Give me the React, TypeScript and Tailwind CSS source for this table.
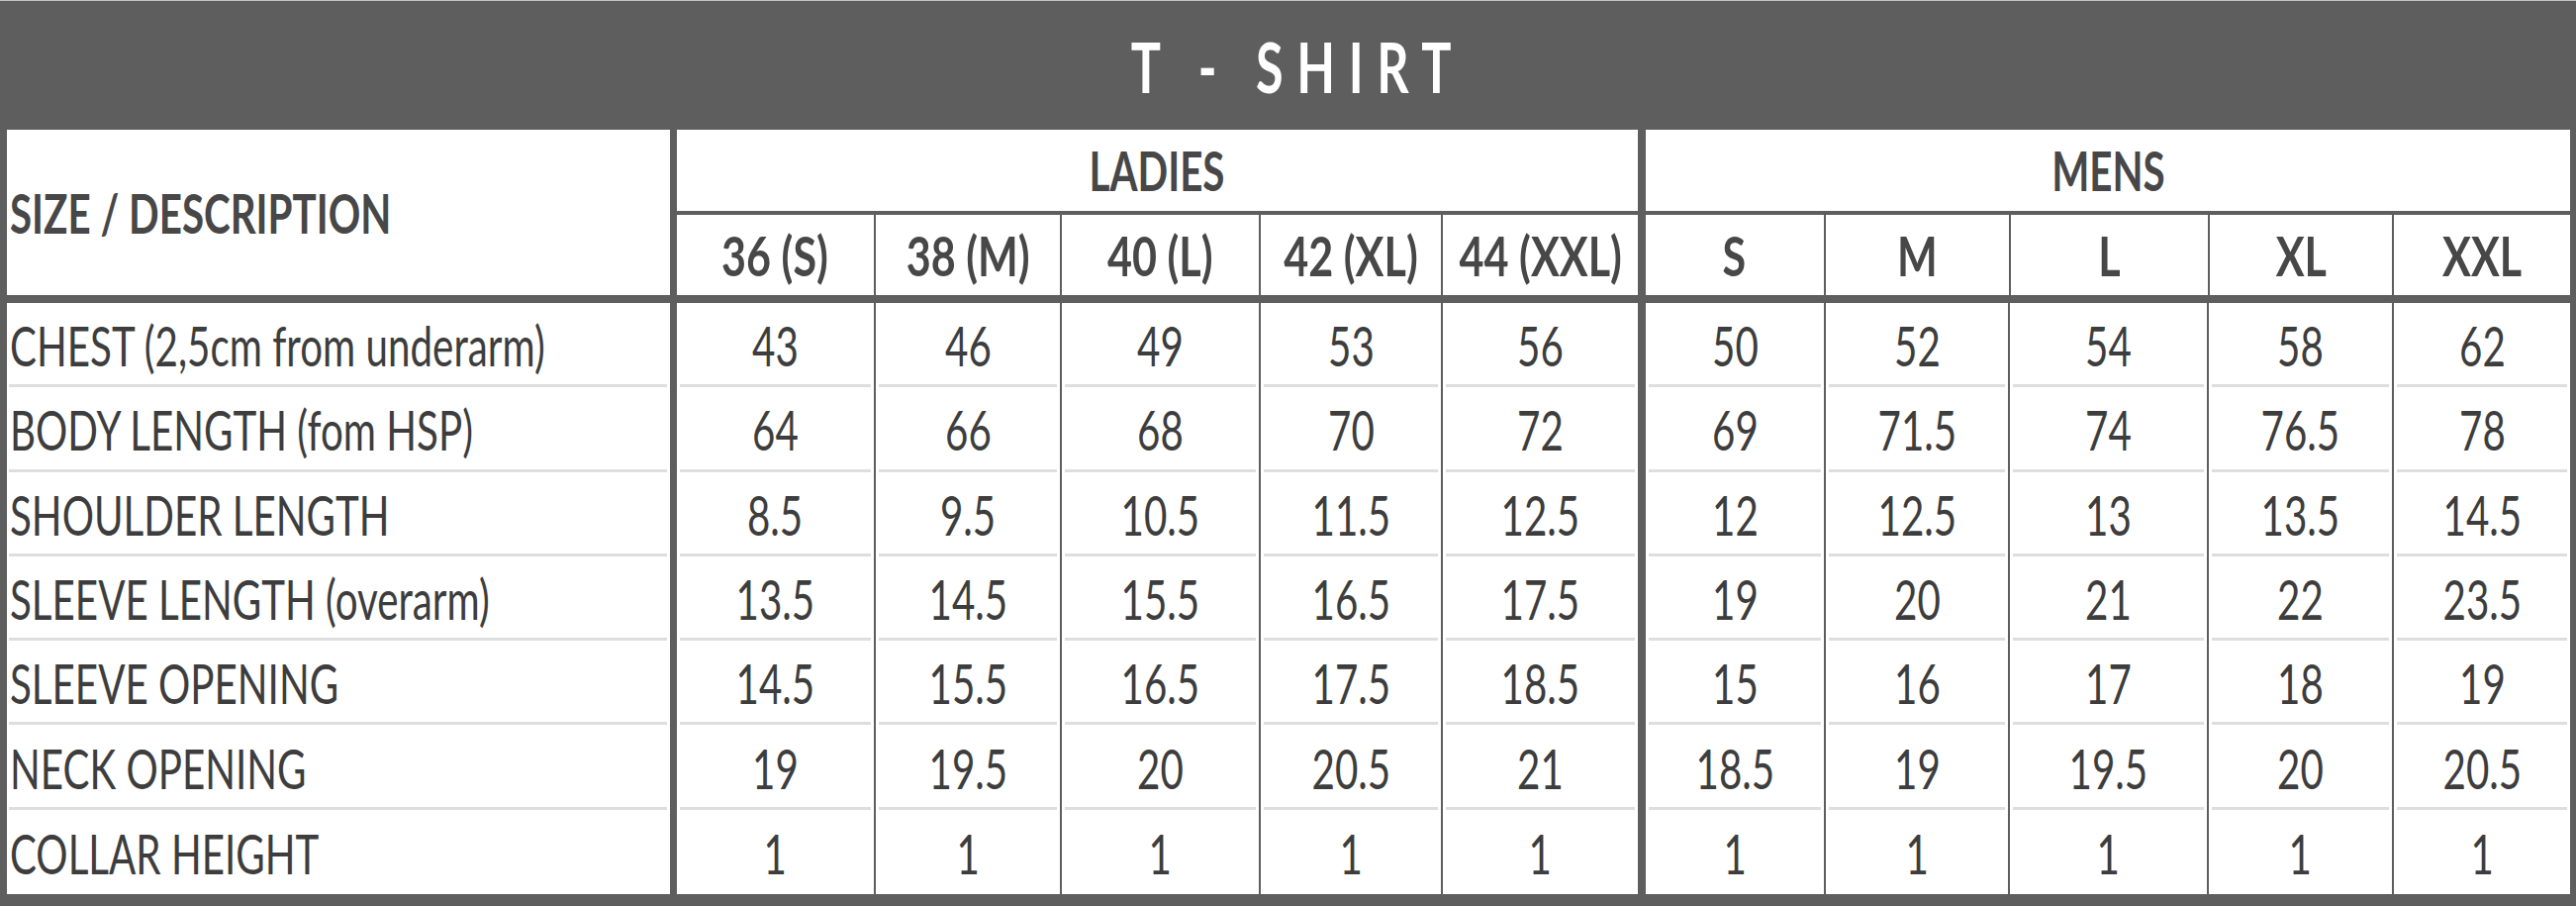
import React from "react";

const ROWS: string[][] = [
  ["CHEST (2,5cm from underarm)", "43", "46", "49", "53", "56", "50", "52", "54", "58", "62"],
  ["BODY LENGTH (fom HSP)", "64", "66", "68", "70", "72", "69", "71.5", "74", "76.5", "78"],
  ["SHOULDER LENGTH", "8.5", "9.5", "10.5", "11.5", "12.5", "12", "12.5", "13", "13.5", "14.5"],
  ["SLEEVE LENGTH (overarm)", "13.5", "14.5", "15.5", "16.5", "17.5", "19", "20", "21", "22", "23.5"],
  ["SLEEVE OPENING", "14.5", "15.5", "16.5", "17.5", "18.5", "15", "16", "17", "18", "19"],
  ["NECK OPENING", "19", "19.5", "20", "20.5", "21", "18.5", "19", "19.5", "20", "20.5"],
  ["COLLAR HEIGHT", "1", "1", "1", "1", "1", "1", "1", "1", "1", "1"],
];

const LADIES = ["36 (S)", "38 (M)", "40 (L)", "42 (XL)", "44 (XXL)"];
const MENS = ["S", "M", "L", "XL", "XXL"];

// border on the left of each data column (thick ones split the groups)
const colBorder = (i: number) => {
  if (i === 0) return "";
  if (i === 1) return "border-l-[7px]";
  if (i === 6) return "border-l-[8px]";
  return "border-l-2";
};

// condensed look of the original chart
function Sq({ children, left, wide }: { children: React.ReactNode; left?: boolean; wide?: boolean }) {
  return (
    <span
      className={`inline-block whitespace-nowrap ${wide ? "scale-x-[0.77]" : "scale-x-[0.72]"} ${
        left ? "origin-left" : "origin-center"
      }`}
    >
      {children}
    </span>
  );
}

function SizeCell({ label, w, first }: { label: string; w: string; first?: boolean }) {
  return (
    <div className={`${w} h-full flex items-center justify-center bg-white border-[#5e5e5e] ${first ? "" : "border-l-2"}`}>
      <Sq wide>{label}</Sq>
    </div>
  );
}

export default function App() {
  return (
    <div className="w-[2603px] h-[915px] bg-[#5e5e5e] flex flex-col font-['Lato','Liberation_Sans',sans-serif] leading-none text-[56px] text-[#3d3d3d]">
      <div className="h-px bg-[#c4c4c4]" />

      {/* title bar */}
      <div className="h-[130px] flex items-center justify-center pt-[2px]">
        <span className="inline-block scale-x-[0.72] text-white font-bold text-[70px] tracking-[0.27em] -mr-[0.27em]">
          T - SHIRT
        </span>
      </div>

      <div className="pl-[7px] pr-[6px]">
        {/* column headers */}
        <div className="flex h-[167px] font-bold text-[#474747]">
          <div className="w-[670px] bg-white flex items-center pl-[3px]">
            <Sq left>SIZE / DESCRIPTION</Sq>
          </div>

          <div className="w-[978px] border-l-[7px] border-[#5e5e5e] flex flex-col">
            <div className="h-[82px] bg-white flex items-center justify-center">
              <Sq>LADIES</Sq>
            </div>
            <div className="h-[4px] bg-[#5e5e5e]" />
            <div className="flex h-[81px]">
              <SizeCell label={LADIES[0]} w="w-[199px]" first />
              <SizeCell label={LADIES[1]} w="w-[188px]" />
              <SizeCell label={LADIES[2]} w="w-[201px]" />
              <SizeCell label={LADIES[3]} w="w-[184px]" />
              <SizeCell label={LADIES[4]} w="w-[199px]" />
            </div>
          </div>

          <div className="w-[942px] border-l-[8px] border-[#5e5e5e] flex flex-col">
            <div className="h-[82px] bg-white flex items-center justify-center">
              <Sq>MENS</Sq>
            </div>
            <div className="h-[4px] bg-[#5e5e5e]" />
            <div className="flex h-[81px]">
              <SizeCell label={MENS[0]} w="w-[180px]" first />
              <SizeCell label={MENS[1]} w="w-[188px]" />
              <SizeCell label={MENS[2]} w="w-[201px]" />
              <SizeCell label={MENS[3]} w="w-[187px]" />
              <SizeCell label={MENS[4]} w="w-[180px]" />
            </div>
          </div>
        </div>

        {/* measurements */}
        <div className="mt-[8px] grid grid-cols-[670px_206px_188px_201px_184px_199px_188px_186px_201px_187px_180px] auto-rows-[85.3px]">
          {ROWS.map((row, r) =>
            row.map((val, c) => (
              <div key={`${r}-${c}`} className={`bg-white flex flex-col border-[#5e5e5e] ${colBorder(c)}`}>
                <div className={`flex-1 flex items-center pt-[4px] ${c === 0 ? "pl-[3px]" : "justify-center"}`}>
                  <Sq left={c === 0}>{val}</Sq>
                </div>
                {r < ROWS.length - 1 && (
                  <div className={`h-[3px] bg-[#dedede] ${c === 0 ? "ml-[2px] mr-[3px]" : "mx-[3px]"}`} />
                )}
              </div>
            ))
          )}
        </div>
      </div>
    </div>
  );
}
